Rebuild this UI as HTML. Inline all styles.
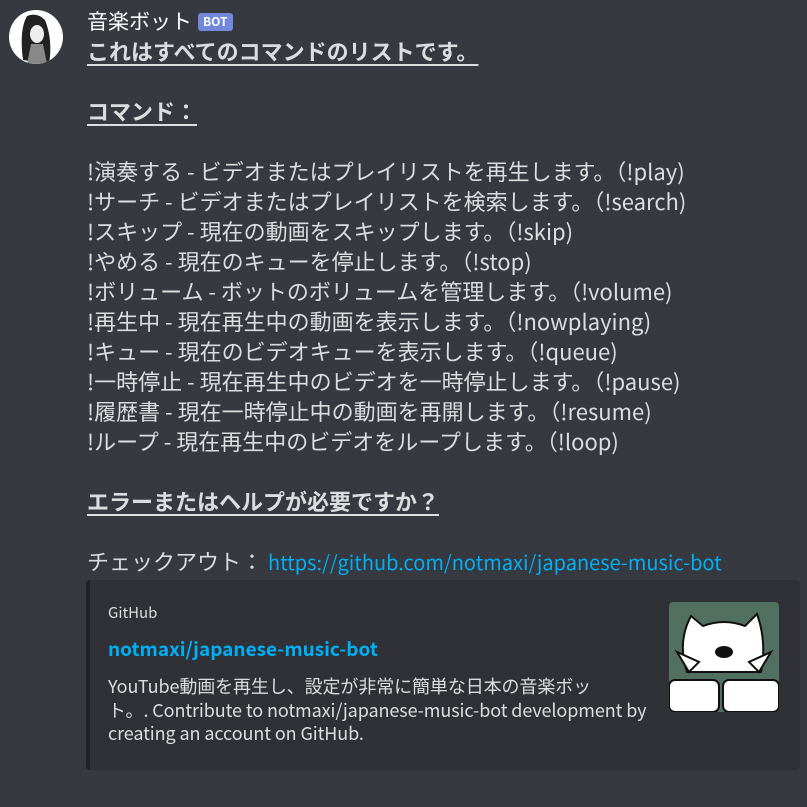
<!DOCTYPE html>
<html><head><meta charset="utf-8"><style>
html,body{margin:0;padding:0;background:#36393f;width:807px;height:807px;overflow:hidden}
body{font-family:"Noto Sans CJK JP","Liberation Sans",sans-serif;color:#dcddde;font-size:22px}
.av{position:absolute;left:9px;top:10px;width:54px;height:54px;border-radius:50%;background:#fff;overflow:hidden}
.msg{position:absolute;left:87px;top:5px;width:715px;line-height:30px;white-space:nowrap}
.name{color:#fff;font-size:21px}
.bot{display:inline-block;background:#7289da;color:#fff;font-size:12px;font-weight:bold;line-height:18px;padding:0 5px;border-radius:3px;vertical-align:3px;margin-left:6px}
b{font-weight:bold;text-decoration:underline;text-decoration-thickness:2px;text-underline-offset:4px}
a{color:#00aff4;text-decoration:none;font-size:20px}
.emb{position:absolute;left:86px;top:580px;width:714px;height:190px;background:#2f3136;border-left:4px solid #202225;border-radius:4px;box-sizing:border-box}
.prov{position:absolute;left:18px;top:22px;font-size:15px;color:#dcddde}
.ttl{position:absolute;left:18px;top:55px;font-size:19px;font-weight:bold;color:#00aff4}
.desc{position:absolute;left:18px;top:95px;white-space:nowrap;font-size:18px;line-height:23.5px;color:#dcddde;letter-spacing:-0.1px}
.th{position:absolute;left:579px;top:22px;width:110px;height:110px;border-radius:4px;background:#52705f;overflow:hidden}
</style></head><body>
<div class="av"><svg width="54" height="54"><path d="M18 6 Q10 20 14 50 L40 54 Q44 30 36 10 Q28 2 18 6Z" fill="#222"/><ellipse cx="28" cy="24" rx="7" ry="9" fill="#eee"/><path d="M22 34 L34 34 L38 54 L18 54Z" fill="#888"/></svg></div>
<div class="msg">
<div><span class="name">音楽ボット</span><span class="bot">BOT</span></div>
<div><b>これはすべてのコマンドのリストです。</b></div>
<div>&nbsp;</div>
<div><b>コマンド：</b></div>
<div>&nbsp;</div>
<div>!演奏する - ビデオまたはプレイリストを再生します。（!play)</div>
<div>!サーチ - ビデオまたはプレイリストを検索します。（!search)</div>
<div>!スキップ - 現在の動画をスキップします。（!skip)</div>
<div>!やめる - 現在のキューを停止します。（!stop)</div>
<div>!ボリューム - ボットのボリュームを管理します。（!volume)</div>
<div>!再生中 - 現在再生中の動画を表示します。（!nowplaying)</div>
<div>!キュー - 現在のビデオキューを表示します。（!queue)</div>
<div>!一時停止 - 現在再生中のビデオを一時停止します。（!pause)</div>
<div>!履歴書 - 現在一時停止中の動画を再開します。（!resume)</div>
<div>!ループ - 現在再生中のビデオをループします。（!loop)</div>
<div>&nbsp;</div>
<div><b>エラーまたはヘルプが必要ですか？</b></div>
<div>&nbsp;</div>
<div>チェックアウト： <a>https://github.com/notmaxi/japanese-music-bot</a></div>
</div>
<div class="emb">
<div class="prov">GitHub</div>
<div class="ttl">notmaxi/japanese-music-bot</div>
<div class="desc">YouTube動画を再生し、設定が非常に簡単な日本の音楽ボッ<br>ト。. Contribute to notmaxi/japanese-music-bot development by<br>creating an account on GitHub.</div>
<div class="th"><svg width="110" height="110"><path d="M18 70 Q8 40 22 14 L34 24 Q55 16 76 24 L88 12 Q98 40 92 70Z" fill="#fff" stroke="#111" stroke-width="2"/><path d="M8 50 L20 70 L30 60Z M102 50 L90 70 L80 60Z" fill="#fff" stroke="#111" stroke-width="2"/><ellipse cx="55" cy="50" rx="9" ry="6" fill="#111"/><rect x="0" y="78" width="50" height="32" rx="6" fill="#fff" stroke="#111" stroke-width="2"/><rect x="54" y="78" width="56" height="32" rx="6" fill="#fff" stroke="#111" stroke-width="2"/></svg></div>
</div>
</body></html>
